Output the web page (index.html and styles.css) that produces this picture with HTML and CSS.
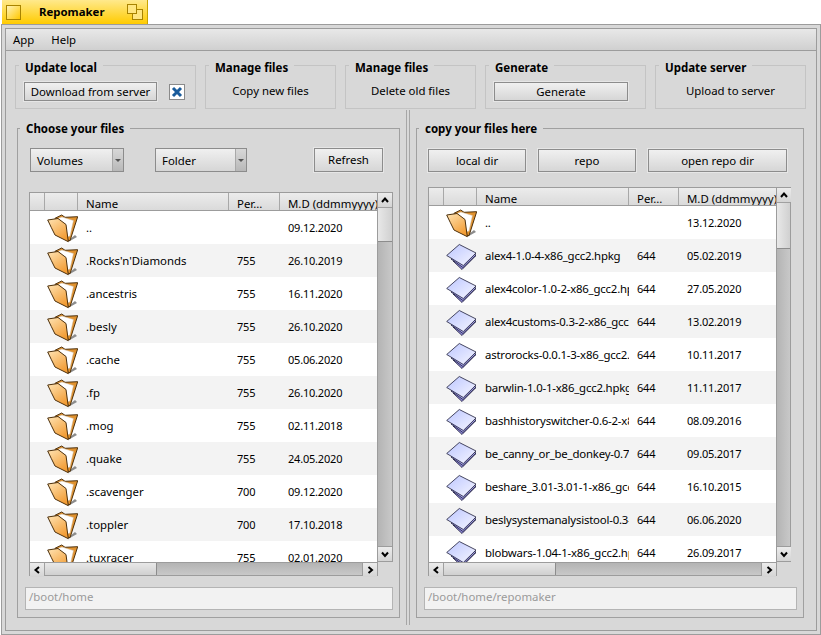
FILE: index.html
```html
<!DOCTYPE html>
<html lang="en">
<head>
<meta charset="utf-8">
<title>Repomaker</title>
<link rel="stylesheet" href="styles.css">
</head>
<body>
<svg class="defs" aria-hidden="true">
  <defs>
    <linearGradient id="fg" x1="0" y1="0" x2="0.6" y2="1"><stop offset="0" stop-color="#ffe4b4"/><stop offset="1" stop-color="#f29c34"/></linearGradient>
    <linearGradient id="pg" x1="0" y1="0" x2="1" y2="1"><stop offset="0" stop-color="#bcc6ff"/><stop offset="1" stop-color="#f6f6ff"/></linearGradient>
    <symbol id="folder" viewBox="0 0 32 32">
      <path d="M22 30 L31 25 L29 23 L24 27 Z" fill="#8c8c8c"/>
      <path d="M9 6.3 L15.7 3 L19 5.3 L31.7 4.7 L24 28.7 L21 28 Z" fill="#e0922f" stroke="#4d300c" stroke-linejoin="round"/>
      <path d="M12.3 6.3 L16 5 L27.5 8.5 L24 24 L21.5 25 Z" fill="#fff" stroke="#c9b49a" stroke-width=".5"/>
      <path d="M1.7 8 L12 6.5 L20 12.5 L22.3 29.7 L9 23 Q5 15 1.7 8 Z" fill="url(#fg)" stroke="#4d300c" stroke-linejoin="round"/>
    </symbol>
    <symbol id="package" viewBox="0 0 32 32">
      <path d="M8 21 L17 29.5 L30.5 16 L26 14 Z" fill="#8d87d8" stroke="#1c1c38" stroke-width=".8" stroke-linejoin="round"/>
      <path d="M6 19 L18 27.5 L31 15 L27 13 Z" fill="#aaa8ee" stroke="#1c1c38" stroke-width=".8" stroke-linejoin="round"/>
      <path d="M1.7 15.5 L14.3 4.5 L31 13 L18.3 25.5 Z" fill="url(#pg)" stroke="#1c1c38" stroke-width=".8" stroke-linejoin="round"/>
    </symbol>
    <symbol id="up" viewBox="0 0 10 10"><path d="M2 7 L5 3.5 L8 7" fill="none" stroke="#000" stroke-width="2"/></symbol>
    <symbol id="down" viewBox="0 0 10 10"><path d="M2 3.5 L5 7 L8 3.5" fill="none" stroke="#000" stroke-width="2"/></symbol>
    <symbol id="left" viewBox="0 0 10 10"><path d="M7 2 L3.5 5 L7 8" fill="none" stroke="#000" stroke-width="2"/></symbol>
    <symbol id="right" viewBox="0 0 10 10"><path d="M3.5 2 L7 5 L3.5 8" fill="none" stroke="#000" stroke-width="2"/></symbol>
  </defs>
</svg>

<header class="tab">
  <span class="close-box"></span>
  <span class="tab-title">Repomaker</span>
  <svg class="zoom-box" viewBox="0 0 16 16"><rect x="5.5" y="5.5" width="10" height="10" fill="#ffe680" stroke="#a88300"/><rect x="0.5" y="0.5" width="9" height="9" fill="#ffe680" stroke="#a88300"/></svg>
</header>

<div class="window">
  <div class="inner">
    <nav class="menubar"><span>App</span><span>Help</span></nav>

    <section class="toolbar">
      <fieldset class="tgroup w181">
        <legend>Update local</legend>
        <div class="tbody">
          <button class="btn dl">Download from server</button>
          <svg class="check" viewBox="0 0 16 16"><rect x="0.5" y="0.5" width="15" height="15" fill="#fff" stroke="#8a8a8a"/><path d="M4 4 L12 12 M12 4 L4 12" stroke="#1a5c9c" stroke-width="3"/></svg>
        </div>
      </fieldset>
      <fieldset class="tgroup w131">
        <legend>Manage files</legend>
        <div class="tbody center">Copy new files</div>
      </fieldset>
      <fieldset class="tgroup w131">
        <legend>Manage files</legend>
        <div class="tbody center">Delete old files</div>
      </fieldset>
      <fieldset class="tgroup w161">
        <legend>Generate</legend>
        <div class="tbody"><button class="btn gen">Generate</button></div>
      </fieldset>
      <fieldset class="tgroup w151">
        <legend>Update server</legend>
        <div class="tbody center">Upload to server</div>
      </fieldset>
    </section>

    <main class="panels">
      <fieldset class="panel left">
        <legend>Choose your files</legend>
        <div class="controls">
          <div class="drop w94"><span class="drop-label">Volumes</span><span class="drop-arrow"></span></div>
          <div class="drop w92"><span class="drop-label">Folder</span><span class="drop-arrow"></span></div>
          <button class="btn refresh">Refresh</button>
        </div>
        <div class="list">
          <div class="table">
            <div class="row head"><span></span><span></span><span>Name</span><span>Per...</span><span>M.D (ddmmyyyy)</span></div>
            <div class="rows">
              <div class="row"><span></span><svg class="ico"><use href="#folder"/></svg><span>..</span><span></span><span>09.12.2020</span></div>
              <div class="row"><span></span><svg class="ico"><use href="#folder"/></svg><span>.Rocks'n'Diamonds</span><span>755</span><span>26.10.2019</span></div>
              <div class="row"><span></span><svg class="ico"><use href="#folder"/></svg><span>.ancestris</span><span>755</span><span>16.11.2020</span></div>
              <div class="row"><span></span><svg class="ico"><use href="#folder"/></svg><span>.besly</span><span>755</span><span>26.10.2020</span></div>
              <div class="row"><span></span><svg class="ico"><use href="#folder"/></svg><span>.cache</span><span>755</span><span>05.06.2020</span></div>
              <div class="row"><span></span><svg class="ico"><use href="#folder"/></svg><span>.fp</span><span>755</span><span>26.10.2020</span></div>
              <div class="row"><span></span><svg class="ico"><use href="#folder"/></svg><span>.mog</span><span>755</span><span>02.11.2018</span></div>
              <div class="row"><span></span><svg class="ico"><use href="#folder"/></svg><span>.quake</span><span>755</span><span>24.05.2020</span></div>
              <div class="row"><span></span><svg class="ico"><use href="#folder"/></svg><span>.scavenger</span><span>700</span><span>09.12.2020</span></div>
              <div class="row"><span></span><svg class="ico"><use href="#folder"/></svg><span>.toppler</span><span>700</span><span>17.10.2018</span></div>
              <div class="row"><span></span><svg class="ico"><use href="#folder"/></svg><span>.tuxracer</span><span>755</span><span>02.01.2020</span></div>
            </div>
          </div>
          <div class="vscroll">
            <span class="sbtn"><svg><use href="#up"/></svg></span>
            <span class="vthumb"></span>
            <span class="vtrack"></span>
            <span class="sbtn"><svg><use href="#down"/></svg></span>
          </div>
          <div class="hscroll">
            <span class="sbtn"><svg><use href="#left"/></svg></span>
            <span class="hthumb"></span>
            <span class="htrack"></span>
            <span class="sbtn"><svg><use href="#right"/></svg></span>
          </div>
        </div>
        <div class="path">/boot/home</div>
      </fieldset>

      <div class="splitter"></div>

      <fieldset class="panel right">
        <legend>copy your files here</legend>
        <div class="controls">
          <button class="btn w98">local dir</button>
          <button class="btn w98">repo</button>
          <button class="btn w139">open repo dir</button>
        </div>
        <div class="list">
          <div class="table">
            <div class="row head"><span></span><span></span><span>Name</span><span>Per...</span><span>M.D (ddmmyyyy)</span></div>
            <div class="rows">
              <div class="row"><span></span><svg class="ico"><use href="#folder"/></svg><span>..</span><span></span><span>13.12.2020</span></div>
              <div class="row"><span></span><svg class="ico"><use href="#package"/></svg><span>alex4-1.0-4-x86_gcc2.hpkg</span><span>644</span><span>05.02.2019</span></div>
              <div class="row"><span></span><svg class="ico"><use href="#package"/></svg><span>alex4color-1.0-2-x86_gcc2.hpkg</span><span>644</span><span>27.05.2020</span></div>
              <div class="row"><span></span><svg class="ico"><use href="#package"/></svg><span>alex4customs-0.3-2-x86_gcc2.hpkg</span><span>644</span><span>13.02.2019</span></div>
              <div class="row"><span></span><svg class="ico"><use href="#package"/></svg><span>astrorocks-0.0.1-3-x86_gcc2.hpkg</span><span>644</span><span>10.11.2017</span></div>
              <div class="row"><span></span><svg class="ico"><use href="#package"/></svg><span>barwlin-1.0-1-x86_gcc2.hpkg</span><span>644</span><span>11.11.2017</span></div>
              <div class="row"><span></span><svg class="ico"><use href="#package"/></svg><span>bashhistoryswitcher-0.6-2-x86_gcc2.hpkg</span><span>644</span><span>08.09.2016</span></div>
              <div class="row"><span></span><svg class="ico"><use href="#package"/></svg><span>be_canny_or_be_donkey-0.7-1-x86_gcc2.hpkg</span><span>644</span><span>09.05.2017</span></div>
              <div class="row"><span></span><svg class="ico"><use href="#package"/></svg><span>beshare_3.01-3.01-1-x86_gcc2.hpkg</span><span>644</span><span>16.10.2015</span></div>
              <div class="row"><span></span><svg class="ico"><use href="#package"/></svg><span>beslysystemanalysistool-0.3-1-x86_gcc2.hpkg</span><span>644</span><span>06.06.2020</span></div>
              <div class="row"><span></span><svg class="ico"><use href="#package"/></svg><span>blobwars-1.04-1-x86_gcc2.hpkg</span><span>644</span><span>26.09.2017</span></div>
            </div>
          </div>
          <div class="vscroll">
            <span class="sbtn"><svg><use href="#up"/></svg></span>
            <span class="vthumb"></span>
            <span class="vtrack"></span>
            <span class="sbtn"><svg><use href="#down"/></svg></span>
          </div>
          <div class="hscroll">
            <span class="sbtn"><svg><use href="#left"/></svg></span>
            <span class="hthumb"></span>
            <span class="htrack"></span>
            <span class="sbtn"><svg><use href="#right"/></svg></span>
          </div>
        </div>
        <div class="path">/boot/home/repomaker</div>
      </fieldset>
    </main>
  </div>
</div>
</body>
</html>
```

FILE: styles.css
```css
* { box-sizing: border-box; }
html, body { margin: 0; padding: 0; background: #fff; }
body {
  width: 821px;
  height: 635px;
  overflow: hidden;
  font: 11.4px/16px "Noto Sans", sans-serif;
  color: #000;
}
.defs { display: block; width: 0; height: 0; }

/* window tab */
.tab {
  display: flex;
  align-items: center;
  width: 146px;
  height: 24px;
  margin-left: 2px;
  padding-left: 4px;
  background: linear-gradient(#ffe98c, #ffcb00);
  border-right: 1px solid #c9a400;
}
.close-box {
  width: 15px;
  height: 15px;
  border: 1px solid #a88300;
  background: linear-gradient(135deg, #fff3b8, #ffc800);
}
.tab-title { margin-left: 18px; font-weight: bold; width: 88px; }
.zoom-box { width: 16px; height: 16px; }

/* window frame */
.window {
  width: 820px;
  height: 611px;
  margin-left: 1px;
  padding: 3px;
  background: #d8d8d8;
  border: 1px solid #9c9c9c;
}
.inner {
  display: flex;
  flex-direction: column;
  height: 100%;
  border: 1px solid #9c9c9c;
}
.menubar {
  display: flex;
  align-items: center;
  gap: 17px;
  height: 22px;
  padding-left: 7px;
  background: linear-gradient(#e8e8e8, #d0d0d0);
  border-bottom: 1px solid #9c9c9c;
}

/* top group boxes */
.toolbar {
  display: flex;
  gap: 9px;
  padding-left: 9px;
  margin-top: 6px;
}
fieldset { margin: 0; padding: 0; min-width: 0; }
legend {
  height: 16px;
  line-height: 18px;
  font-size: 11.5px;
  font-weight: bold;
  white-space: nowrap;
}
.tgroup { height: 52px; border: 1px solid #c4c4c4; }
.tgroup legend { margin-left: 3px; padding: 0 6px; line-height: 22px; }
.w181 { width: 181px; }
.w131 { width: 131px; }
.w161 { width: 161px; }
.w151 { width: 151px; }
.tbody {
  display: flex;
  align-items: center;
  height: 19px;
  margin-top: 9px;
  padding-left: 8px;
}
.tbody.center { justify-content: center; padding: 0 0 2px; }
.btn {
  font: inherit;
  color: #000;
  padding: 0;
  height: 24px;
  border: 1px solid #8c8c8c;
  background: linear-gradient(#f0f0f0, #d6d6d6);
  box-shadow: 0 0 0 1px #e6e6e6;
}
.tbody .btn { height: 19px; }
.dl { width: 133px; }
.gen { width: 134px; }
.check { width: 16px; height: 16px; margin-left: 12px; }

/* lower panels */
.panels { display: flex; flex: 1; min-height: 0; margin-top: 1px; }
.panel {
  height: 498px;
  margin-top: 10px;
  border: 1px solid #a0a0a0;
  padding: 0 7px;
}
.panel legend { margin-left: -5px; padding: 0 6px; }
.left { width: 383px; margin-left: 11px; }
.right { width: 388px; }
.splitter {
  width: 4px;
  margin: 0 6px;
  height: 515px;
  border-left: 1px solid #a6a6a6;
  border-right: 1px solid #a6a6a6;
}
.controls { display: flex; }
.left .controls { margin: 12px 0 0 5px; gap: 31px; height: 24px; }
.right .controls { margin: 13px 0 0 4px; gap: 12px; height: 23px; }
.right .controls .btn { height: 23px; }
.refresh { width: 69px; margin-left: 36px; }
.w98 { width: 98px; }
.w139 { width: 139px; }
.drop {
  display: flex;
  height: 24px;
  border: 1px solid #8c8c8c;
  background: linear-gradient(#f0f0f0, #d6d6d6);
}
.w94 { width: 94px; }
.w92 { width: 92px; }
.drop-label { flex: 1; padding-left: 6px; line-height: 23px; }
.drop-arrow {
  display: flex;
  align-items: center;
  justify-content: center;
  width: 11px;
  border-left: 1px solid #a8a8a8;
  background: linear-gradient(#d8d8d8, #b8b8b8);
}
.drop-arrow::after {
  content: "";
  border: 3px solid transparent;
  border-top: 3px solid #555;
  border-bottom: 0;
}

/* list view */
.list {
  display: grid;
  grid-template-columns: 349px 15px;
  grid-template-rows: 370px 14px;
  margin-left: 4px;
}
.left .list { margin-top: 20px; }
.right .list { margin-top: 15px; height: 389px; grid-template-rows: 375px 14px; }
.right .list { grid-template-columns: 349px 14px; }
.table {
  display: flex;
  flex-direction: column;
  min-height: 0;
  border: 1px solid #9c9c9c;
  border-bottom: 0;
  overflow: hidden;
  background: #fff;
}
.row {
  display: grid;
  grid-template-columns: 15px 33px 151px 51px 98px;
  align-items: center;
  height: 33px;
  flex: none;
}
.right .row { grid-template-columns: 15px 33px 152px 50px 98px; }
.row > span { padding-left: 8px; overflow: hidden; white-space: nowrap; }
.rows .row > span:nth-of-type(n+3) { font-size: 11px; letter-spacing: -.2px; }
.right .rows .row > span:nth-of-type(2) { letter-spacing: -.2px; }
.rows .row:nth-child(even) { background: #f3f3f3; }
.rows { flex: 1; min-height: 0; overflow: hidden; }
.row.head {
  height: 18px;
  align-items: stretch;
  background: linear-gradient(#ececec, #dadada);
  border-bottom: 1px solid #9c9c9c;
}
.row.head > span {
  border-right: 1px solid #a8a8a8;
  line-height: 19px;
  padding-top: 1px;
}
.row.head > span:last-child { border-right: 0; }
.ico { width: 32px; height: 32px; margin-left: 1px; }

/* scrollbars */
.vscroll {
  display: flex;
  flex-direction: column;
  grid-column: 2;
  grid-row: 1;
  border: 1px solid #9c9c9c;
  border-left: 0;
  background: #bcbcbc;
}
.hscroll {
  display: flex;
  grid-column: 1;
  grid-row: 2;
  border: 1px solid #9c9c9c;
  background: #bcbcbc;
}
.sbtn {
  display: flex;
  align-items: center;
  justify-content: center;
  flex: none;
  width: 14px;
  height: 14px;
  background: linear-gradient(#ececec, #d4d4d4);
}
.sbtn svg { width: 10px; height: 10px; }
.vthumb {
  height: 35px;
  flex: none;
  background: linear-gradient(90deg, #e8e8e8, #d0d0d0);
  border-top: 1px solid #a0a0a0;
  border-bottom: 1px solid #8c8c8c;
}
.right .vthumb { height: 47px; }
.vtrack { flex: 1; background: linear-gradient(90deg, #b4b4b4, #c8c8c8); border-bottom: 1px solid #9c9c9c; }
.hthumb {
  width: 113px;
  flex: none;
  background: linear-gradient(#e8e8e8, #d0d0d0);
  border-left: 1px solid #a0a0a0;
  border-right: 1px solid #8c8c8c;
}
.htrack { flex: 1; background: linear-gradient(#b4b4b4, #c8c8c8); border-right: 1px solid #9c9c9c; }

/* path field */
.path {
  height: 23px;
  line-height: 18px;
  margin-top: 11px;
  padding-left: 3px;
  background: #f2f2f2;
  border: 1px solid #b4b4b4;
  color: #9a9a9a;
}
.left .path { width: 368px; }
.right .path { width: 373px; }
```
